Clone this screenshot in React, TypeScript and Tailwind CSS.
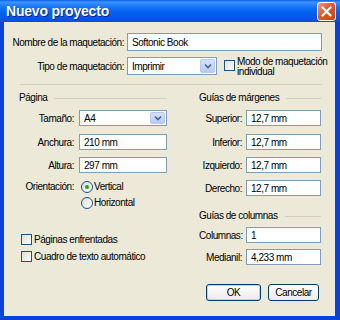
import React from "react";

function Field({ value, w, h = 16 }: { value: string; w: number; h?: number }) {
  return (
    <div
      className="bg-white border border-[#7F9DB9] flex items-center pl-[4px] box-border"
      style={{ width: w, height: h }}
    >
      {value}
    </div>
  );
}

function Select({ value, w, h = 16 }: { value: string; w: number; h?: number }) {
  return (
    <div
      className="bg-white border border-[#7F9DB9] flex items-center pl-[4px] pr-[1px] box-border"
      style={{ width: w, height: h }}
    >
      <span className="flex-1">{value}</span>
      <div className="w-[15px] h-full py-[1px] box-border">
        <div className="w-full h-full rounded-[2px] bg-[linear-gradient(to_bottom,#D5E2FD,#B5CBF8)] border border-[#B6C9F3] flex items-center justify-center box-border">
          <svg width="8" height="6" viewBox="0 0 8 6">
            <path d="M1 1.5 L4 4.5 L7 1.5" stroke="#4D6185" strokeWidth="1.6" fill="none" />
          </svg>
        </div>
      </div>
    </div>
  );
}

function Checkbox() {
  return (
    <div className="w-[11px] h-[11px] border border-[#1C5180] bg-[linear-gradient(135deg,#DCDCD7,#FFFFFF)] box-border shrink-0" />
  );
}

function Radio({ checked }: { checked?: boolean }) {
  return (
    <div className="w-[12px] h-[12px] rounded-full border border-[#1C5180] bg-[linear-gradient(135deg,#DCDCD7,#FFFFFF)] box-border flex items-center justify-center shrink-0">
      {checked && <div className="w-[4px] h-[4px] rounded-full bg-[#21A121]" />}
    </div>
  );
}

function Header({ text }: { text: string }) {
  return (
    <div className="h-[12px] flex items-center">
      <span className="whitespace-nowrap">{text}</span>
      <div className="flex-1 h-[1px] bg-[#D0D0BF] mt-[2px] ml-[7px]" />
    </div>
  );
}

function LeftRow({ label, children, mt }: { label: string; children: React.ReactNode; mt: number }) {
  return (
    <div className="flex items-center" style={{ marginTop: mt }}>
      <div className="w-[55px] text-right whitespace-nowrap">{label}</div>
      <div className="ml-[5px]">{children}</div>
    </div>
  );
}

function RightRow({ label, children, mt }: { label: string; children: React.ReactNode; mt: number }) {
  return (
    <div className="flex items-center" style={{ marginTop: mt }}>
      <div className="w-[43px] text-right whitespace-nowrap">{label}</div>
      <div className="ml-[4px]">{children}</div>
    </div>
  );
}

export default function App() {
  return (
    <div className="w-[340px] h-[320px] flex flex-col overflow-hidden text-[10px] leading-[13px] tracking-[-0.45px] text-black font-['Liberation_Sans',Arial,sans-serif]">
      {/* Title bar */}
      <div className="h-[22px] shrink-0 flex items-center pl-[6px] pr-[4px] bg-[linear-gradient(to_bottom,#0A5CEB_0%,#3D95FF_9%,#2A84FD_20%,#0C6CF6_40%,#0560EE_60%,#0458E6_80%,#0350DA_100%)]">
        <span className="flex-1 text-white font-bold text-[14px] tracking-[-0.2px] [text-shadow:1px_1px_0_#0A1E8C]">Nuevo proyecto</span>
        <div className="w-[19px] h-[19px] rounded-[3px] border border-white bg-[linear-gradient(135deg,#F29A7A_0%,#E2582E_45%,#C8401C_100%)] flex items-center justify-center box-border">
          <svg width="11" height="11" viewBox="0 0 11 11">
            <path d="M1.5 1.5 L9.5 9.5 M9.5 1.5 L1.5 9.5" stroke="white" strokeWidth="2.2" strokeLinecap="round" />
          </svg>
        </div>
      </div>
      {/* Frame + client */}
      <div className="flex-1 flex bg-[#0842D6] pl-[4px] pr-[5px] pb-[4px]">
        <div className="flex-1 bg-[#ECE9D8] flex flex-col">
          {/* Row 1 */}
          <div className="flex items-center mt-[11px]">
            <div className="w-[120px] text-right whitespace-nowrap">Nombre de la maquetación:</div>
            <div className="ml-[3px]">
              <Field value="Softonic Book" w={195} h={18} />
            </div>
          </div>
          {/* Row 2 */}
          <div className="flex items-start mt-[6px]">
            <div className="w-[120px] h-[18px] flex items-center justify-end whitespace-nowrap">Tipo de maquetación:</div>
            <div className="ml-[3px]">
              <Select value="Imprimir" w={90} h={18} />
            </div>
            <div className="mt-[3px] ml-[7px]">
              <Checkbox />
            </div>
            <div className="ml-[2px] leading-[10px] whitespace-nowrap">
              <div>Modo de maquetación</div>
              <div>individual</div>
            </div>
          </div>
          {/* Separator */}
          <div className="ml-[16px] w-[302px] h-[1px] bg-[#D0D0BF] mt-[7px]" />
          {/* Columns */}
          <div className="flex ml-[15px]">
            {/* Left */}
            <div className="w-[148px] flex flex-col">
              <div className="mt-[6px]">
                <Header text="Página" />
              </div>
              <LeftRow label="Tamaño:" mt={7}>
                <Select value="A4" w={88} />
              </LeftRow>
              <LeftRow label="Anchura:" mt={8}>
                <Field value="210 mm" w={88} />
              </LeftRow>
              <LeftRow label="Altura:" mt={7}>
                <Field value="297 mm" w={88} />
              </LeftRow>
              <LeftRow label="Orientación:" mt={7}>
                <div className="flex items-center ml-[2px]">
                  <Radio checked />
                  <span className="ml-[1px]">Vertical</span>
                </div>
              </LeftRow>
              <div className="flex items-center ml-[62px] mt-[3px]">
                <Radio />
                <span className="ml-[1px]">Horizontal</span>
              </div>
              <div className="flex items-center ml-[2px] mt-[24px] whitespace-nowrap">
                <Checkbox />
                <span className="ml-[2px]">Páginas enfrentadas</span>
              </div>
              <div className="flex items-center ml-[2px] mt-[4px] whitespace-nowrap">
                <Checkbox />
                <span className="ml-[2px]">Cuadro de texto automático</span>
              </div>
            </div>
            {/* Right */}
            <div className="w-[122px] ml-[32px] flex flex-col">
              <div className="mt-[6px]">
                <Header text="Guías de márgenes" />
              </div>
              <RightRow label="Superior:" mt={7}>
                <Field value="12,7 mm" w={75} />
              </RightRow>
              <RightRow label="Inferior:" mt={8}>
                <Field value="12,7 mm" w={75} />
              </RightRow>
              <RightRow label="Izquierdo:" mt={7}>
                <Field value="12,7 mm" w={75} />
              </RightRow>
              <RightRow label="Derecho:" mt={7}>
                <Field value="12,7 mm" w={75} />
              </RightRow>
              <div className="mt-[13px]">
                <Header text="Guías de columnas" />
              </div>
              <RightRow label="Columnas:" mt={6}>
                <Field value="1" w={75} />
              </RightRow>
              <RightRow label="Medianil:" mt={6}>
                <Field value="4,233 mm" w={75} />
              </RightRow>
              <div className="flex justify-end mt-[19px] pr-[2px] gap-[7px]">
                <div className="w-[55px] h-[17px] rounded-[3px] border border-[#003C74] bg-[linear-gradient(to_bottom,#FFFFFF,#ECEBE6)] shadow-[inset_0_0_0_1px_#B8D0F5] flex items-center justify-center box-border">
                  OK
                </div>
                <div className="w-[51px] h-[17px] rounded-[3px] border border-[#003C74] bg-[linear-gradient(to_bottom,#FFFFFF,#ECEBE6)] flex items-center justify-center box-border">
                  Cancelar
                </div>
              </div>
            </div>
          </div>
        </div>
      </div>
    </div>
  );
}
